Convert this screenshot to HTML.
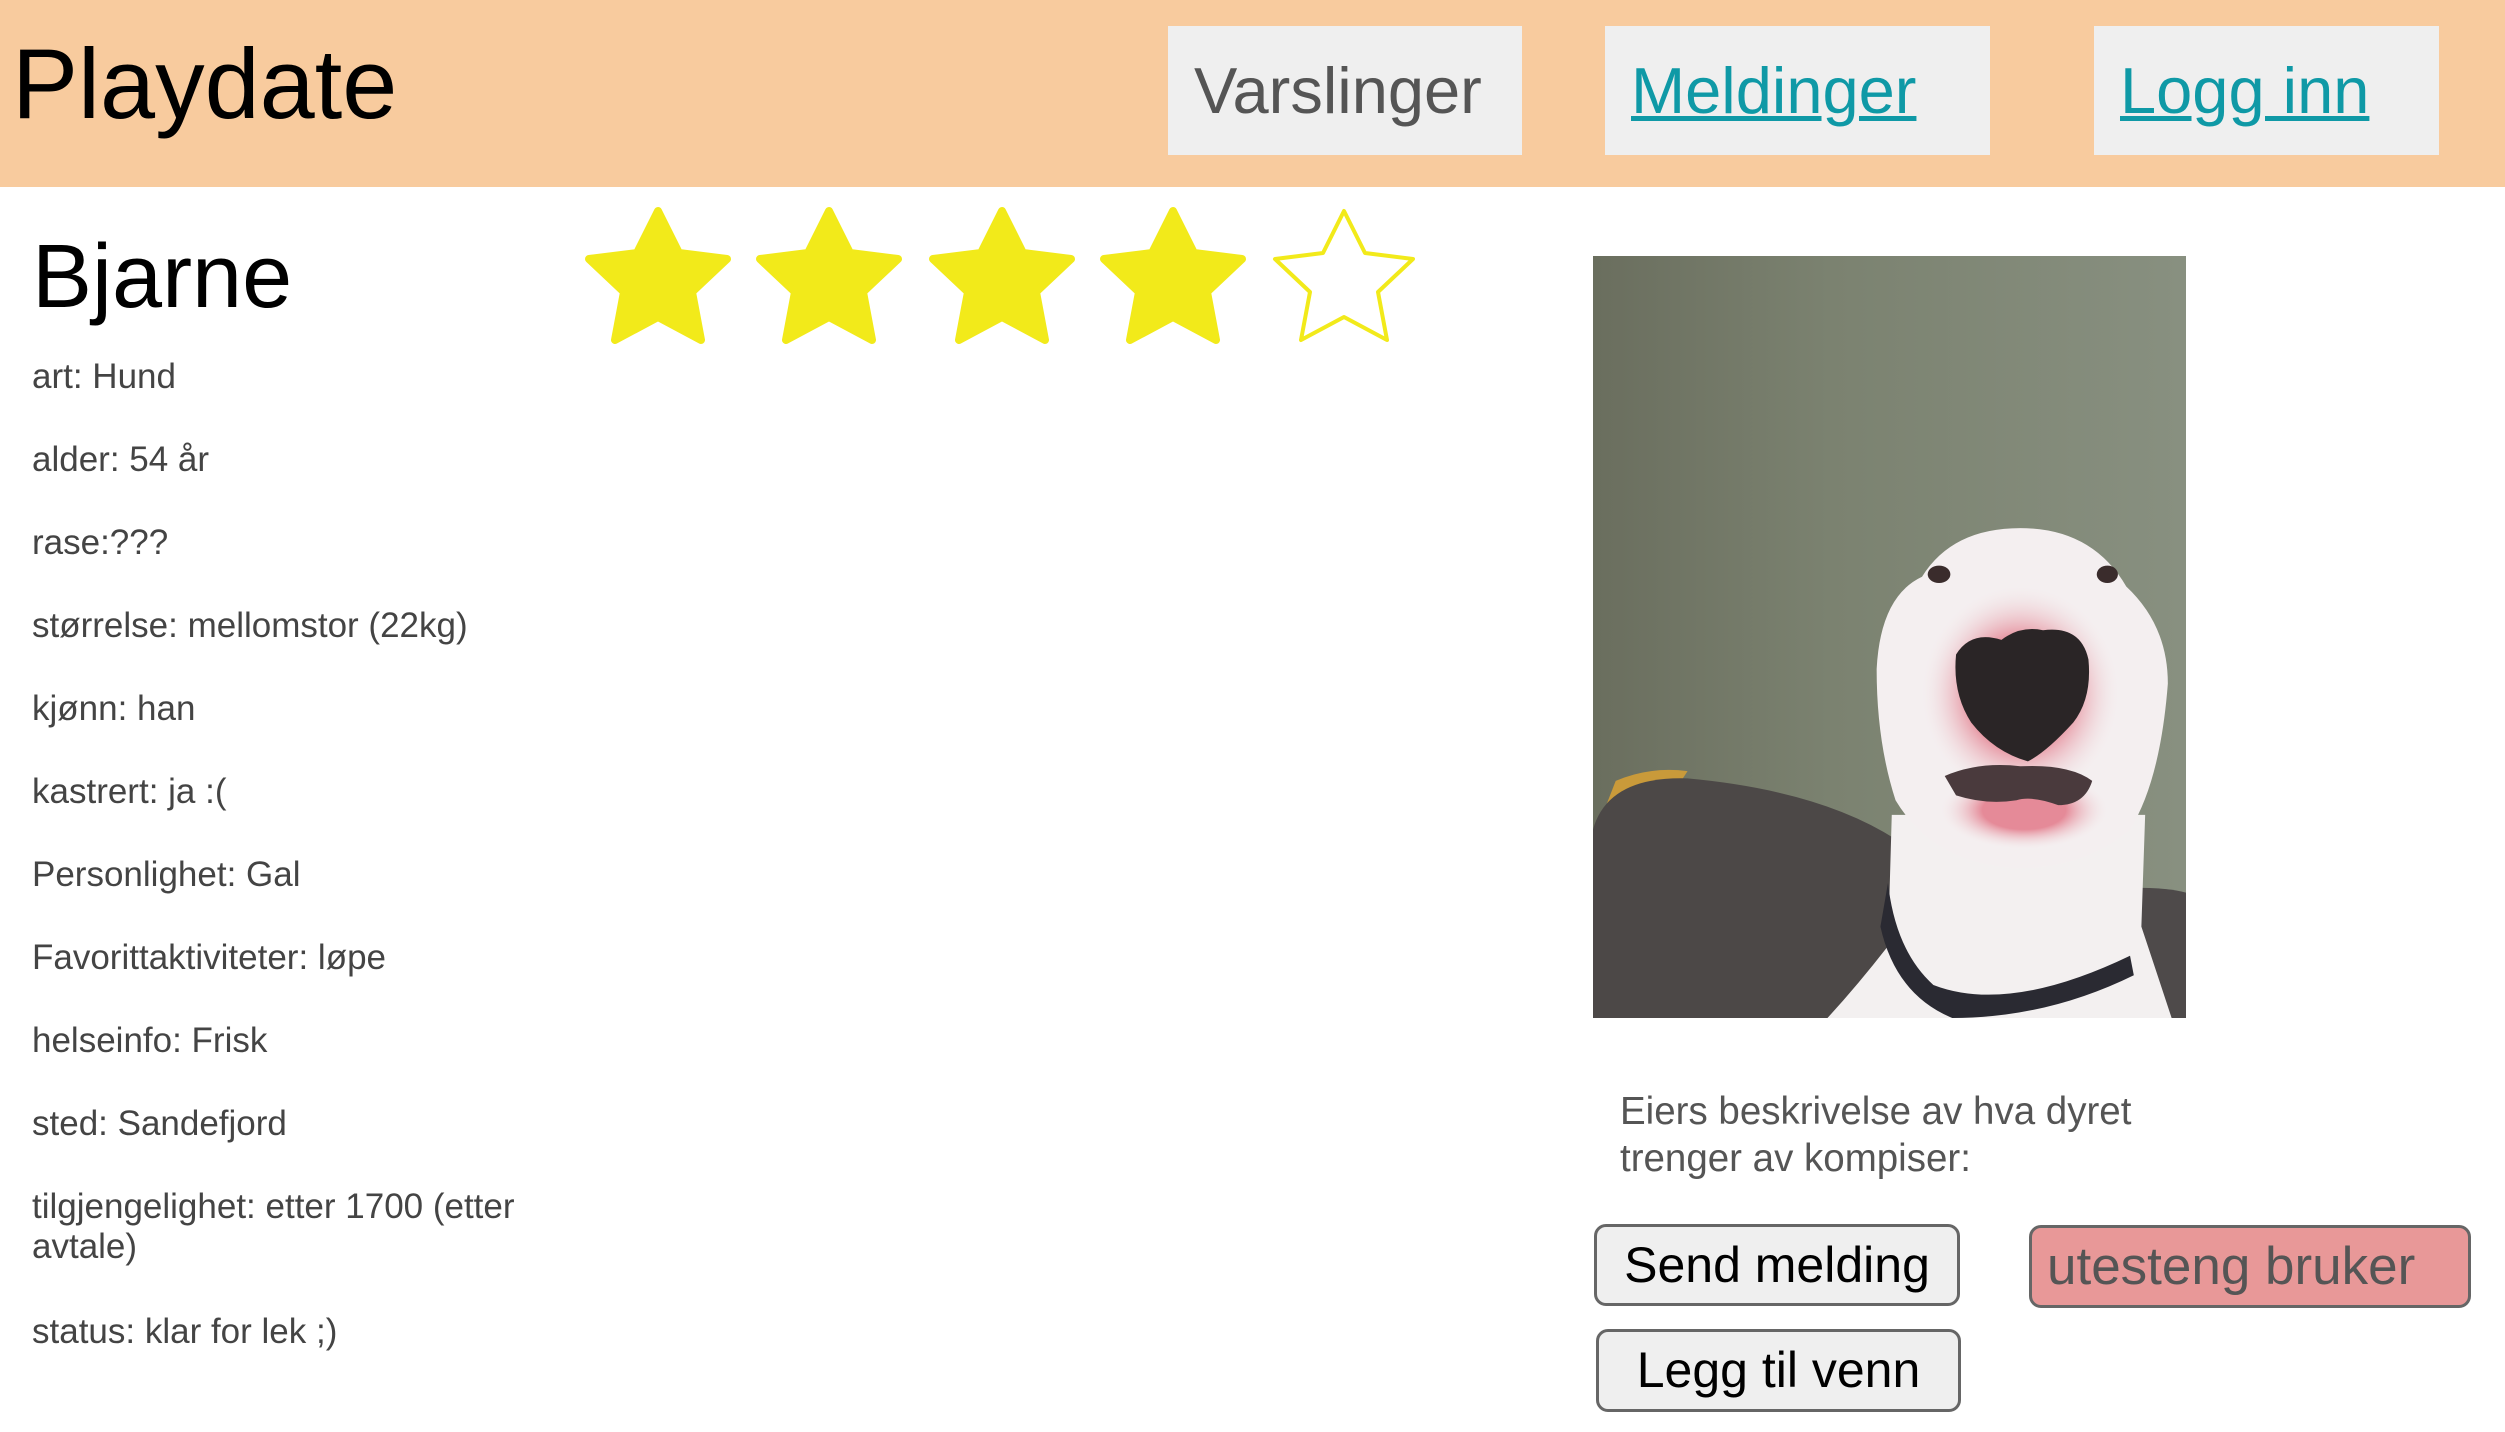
<!DOCTYPE html>
<html><head><meta charset="utf-8"><style>
html,body{margin:0;padding:0;width:2505px;height:1432px;overflow:hidden;background:#fff;font-family:"Liberation Sans",sans-serif}
.hdr{position:absolute;left:0;top:0;width:2505px;height:187px;background:#f8cb9e}
.abs{position:absolute;white-space:nowrap}
.nav{position:absolute;top:26px;height:129px;background:#efefef;font-size:65px;line-height:129px;box-sizing:border-box}
.nav a{color:#0f99a6;text-decoration:underline;text-decoration-thickness:5px}
.info{position:absolute;left:32px;font-size:35px;color:#444;white-space:nowrap}
.btn{position:absolute;box-sizing:border-box;border:3px solid #666;border-radius:12px;background:#efefef;font-size:50px;color:#000;text-align:center}
</style></head><body>
<div class="hdr"></div>
<div class="abs" style="left:12px;top:24px;font-size:99px;line-height:120px;color:#000">Playdate</div>
<div class="nav" style="left:1168px;width:354px;padding-left:26px;color:#555">Varslinger</div>
<div class="nav" style="left:1605px;width:385px;padding-left:26px"><a>Meldinger</a></div>
<div class="nav" style="left:2094px;width:345px;padding-left:26px"><a>Logg inn</a></div>

<div class="abs" style="left:32px;top:224px;font-size:90px;line-height:106px;color:#000">Bjarne</div>

<svg class="abs" style="left:580px;top:204px" width="850" height="160" viewBox="0 0 850 160">
<defs><path id="st" d="M0,-70 L21,-28 L69,-22 L34,11 L43,59 L0,36 L-43,59 L-34,11 L-69,-22 L-21,-28 Z" stroke-linejoin="round"/></defs>
<use href="#st" x="78" y="77" fill="#f2ea1a" stroke="#f2ea1a" stroke-width="8"/>
<use href="#st" x="249" y="77" fill="#f2ea1a" stroke="#f2ea1a" stroke-width="8"/>
<use href="#st" x="422" y="77" fill="#f2ea1a" stroke="#f2ea1a" stroke-width="8"/>
<use href="#st" x="593" y="77" fill="#f2ea1a" stroke="#f2ea1a" stroke-width="8"/>
<use href="#st" x="764" y="77" fill="#fff" stroke="#f2ea1a" stroke-width="4"/>
</svg>

<div class="info" style="top:357px">art: Hund</div>
<div class="info" style="top:440px">alder: 54 år</div>
<div class="info" style="top:523px">rase:???</div>
<div class="info" style="top:606px">størrelse: mellomstor (22kg)</div>
<div class="info" style="top:689px">kjønn: han</div>
<div class="info" style="top:772px">kastrert: ja :(</div>
<div class="info" style="top:855px">Personlighet: Gal</div>
<div class="info" style="top:938px">Favorittaktiviteter: løpe</div>
<div class="info" style="top:1021px">helseinfo: Frisk</div>
<div class="info" style="top:1104px">sted: Sandefjord</div>
<div class="info" style="top:1187px;line-height:40px">tilgjengelighet: etter 1700 (etter<br>avtale)</div>
<div class="info" style="top:1312px">status: klar for lek ;)</div>

<svg class="abs" style="left:1593px;top:256px" width="593" height="762" viewBox="0 0 1568 1568" preserveAspectRatio="none">
<defs>
<linearGradient id="wall" x1="0" x2="1" y1="0" y2="0"><stop offset="0" stop-color="#6a6e5e"/><stop offset="0.4" stop-color="#7b8270"/><stop offset="1" stop-color="#889080"/></linearGradient>
<radialGradient id="pink" cx="0.5" cy="0.5" r="0.5"><stop offset="0.5" stop-color="#e58a98"/><stop offset="1" stop-color="#f2e4e6" stop-opacity="0"/></radialGradient>
</defs>
<rect width="1568" height="1568" fill="url(#wall)"/>
<path d="M60,1080 Q150,1050 250,1060 L200,1120 L20,1160 Z" fill="#c99a3a"/>
<path d="M0,1180 Q40,1070 250,1075 Q600,1100 800,1200 L800,1568 L0,1568 Z" fill="#4c4847"/>
<path d="M1440,1300 Q1520,1300 1568,1310 L1568,1568 L1440,1568 Z" fill="#4e4a4a"/>
<path d="M790,1150 L780,1420 Q700,1500 620,1568 L1530,1568 Q1480,1450 1450,1380 L1460,1150 Z" fill="#f3f0f0"/>
<path d="M750,850 Q760,700 870,660 Q950,560 1130,560 Q1320,560 1410,680 Q1520,760 1520,880 Q1500,1080 1420,1180 Q1300,1260 1120,1260 Q900,1250 800,1120 Q750,1000 750,850 Z" fill="#f4eff0"/>
<ellipse cx="1130" cy="900" rx="260" ry="220" fill="url(#pink)"/>
<ellipse cx="1140" cy="1140" rx="220" ry="80" fill="url(#pink)"/>
<path d="M960,820 Q1000,770 1080,790 Q1130,760 1190,770 Q1290,760 1310,830 Q1320,910 1270,960 Q1200,1020 1150,1040 Q1060,1020 1000,960 Q950,900 960,820 Z" fill="#2a2526"/>
<path d="M930,1070 Q1020,1040 1130,1050 Q1260,1045 1320,1080 Q1300,1130 1230,1130 Q1160,1110 1120,1120 Q1040,1130 960,1110 Z" fill="#4a3a3d"/>
<ellipse cx="915" cy="655" rx="30" ry="18" fill="#3a2c2c"/>
<ellipse cx="1360" cy="655" rx="28" ry="18" fill="#3a2c2c"/>
<path d="M780,1290 Q800,1430 900,1500 Q1100,1560 1420,1440 L1430,1480 Q1200,1568 950,1568 Q800,1520 760,1380 Z" fill="#2a2a32"/>
</svg>

<div class="abs" style="left:1620px;top:1088px;font-size:38.5px;line-height:47px;color:#555">Eiers beskrivelse av hva dyret<br>trenger av kompiser:</div>

<div class="btn" style="left:1594px;top:1224px;width:366px;height:82px;line-height:76px">Send melding</div>
<div class="btn" style="left:2029px;top:1225px;width:442px;height:83px;line-height:77px;background:#e89898;color:#555;text-align:left;padding-left:15px;font-size:53px">utesteng bruker</div>
<div class="btn" style="left:1596px;top:1329px;width:365px;height:83px;line-height:77px">Legg til venn</div>
</body></html>
